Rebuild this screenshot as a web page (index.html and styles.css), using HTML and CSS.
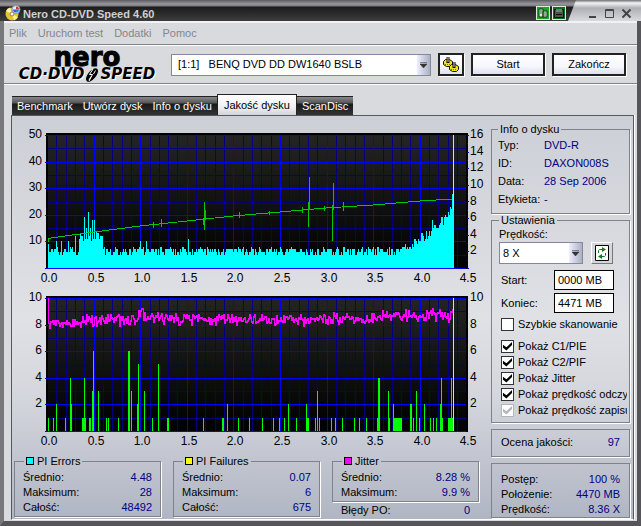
FILE: index.html
```html
<!DOCTYPE html>
<html lang="pl">
  <head>
    <meta charset="UTF-8" />
    <meta name="viewport" content="width=device-width, initial-scale=1.0" />
    <title>Nero CD-DVD Speed 4.60</title>
    <link rel="stylesheet" href="styles.css">
  </head>
  <body>
    <div class="window">
      <header class="titlebar">
        <svg class="app-icon" width="16" height="16" viewBox="0 0 16 16" aria-hidden="true">
          <circle cx="7" cy="9" r="6.5" fill="#e3c62c" />
          <path d="M7 9L1 6a6.5 6.5 0 0 1 4-3.500z" fill="#fff6b0" />
          <path d="M7 9l6 3a6.500 6.500 0 0 1-4 3.400z" fill="#fff08a" />
          <circle cx="7" cy="9" r="2" fill="#f4f4f4" stroke="#998a33" />
          <circle cx="11" cy="4.500" r="4" fill="#e8eef8" stroke="#7f93b5" />
          <path d="M11 4.500V1.500a3 3 0 0 1 3 3z" fill="#d33" />
          <path d="M11 4.500h3a3 3 0 0 1-3 3z" fill="#2a8ad0" />
          <path d="M11 4.500v3a3 3 0 0 1-3-3z" fill="#3a62c8" />
        </svg>
        <h1>Nero CD-DVD Speed 4.60</h1>
        <button class="green-btn" aria-label="Kopiuj">
          <svg width="14" height="14" viewBox="0 0 14 14">
            <path d="M3 3h4v8H3zM7 5h4v6H7z" fill="#d8ead8" stroke="#123c12" />
            <path d="M8 7h2M8 9h2M4 5h2M4 7h2" stroke="#4a6b4a" />
          </svg>
        </button>
        <button class="green-btn dark" aria-label="Zapisz">
          <svg width="14" height="14" viewBox="0 0 14 14">
            <path d="M2.500 3.500h9v8h-9z" fill="#4a564a" stroke="#111" />
            <path d="M4 3h6v3H4z" fill="#6f806f" />
            <path d="M4 8.500h6" stroke="#111" />
          </svg>
        </button>
        <div class="caption-buttons">
          <button aria-label="Minimalizuj">
            <svg width="11" height="11" viewBox="0 0 11 11"><path d="M2 9h7" stroke="#444" stroke-width="2" /></svg>
          </button>
          <button aria-label="Maksymalizuj">
            <svg width="11" height="11" viewBox="0 0 11 11"><path d="M1.500 1.500h8v8h-8zM1 2.500h9" fill="none" stroke="#444" /></svg>
          </button>
          <button aria-label="Zamknij">
            <svg width="11" height="11" viewBox="0 0 11 11"><path d="M1.500 1.500l8 8M9.500 1.500l-8 8" stroke="#444" stroke-width="2" /></svg>
          </button>
        </div>
      </header>

      <nav class="menu">
        <a href="#">Plik</a>
        <a href="#">Uruchom test</a>
        <a href="#">Dodatki</a>
        <a href="#">Pomoc</a>
      </nav>

      <div class="toolbar">
        <div class="logo">
          <div class="logo-top">nero</div>
          <div class="logo-bottom">
            <span>CD·DVD</span>
            <svg width="16" height="14" viewBox="0 0 16 14" aria-hidden="true">
              <ellipse cx="8" cy="7" rx="8" ry="4" transform="rotate(-50 8 7)" />
              <path d="M9 1L5.500 6.500h3L5 13" fill="none" stroke="#fff" stroke-width="1" />
              <path d="M11.500 2.500L9.500 6M7 8.500L5 12" stroke="#fff" />
            </svg>
            <span>SPEED</span>
          </div>
        </div>
        <div class="combo drive">
          <select aria-label="Napęd">
            <option>[1:1] &nbsp; BENQ DVD DD DW1640 BSLB</option>
          </select>
          <svg width="7" height="6" viewBox="0 0 7 6"><path d="M0 .5h7M0 2h7L3.500 6z" fill="#333" stroke="#333" stroke-width=".5" /></svg>
        </div>
        <button class="tool-btn eject" aria-label="Opcje napędu">
          <svg width="18" height="18" viewBox="0 0 18 18">
            <g stroke="#111" fill="#f2e414">
              <path d="M1.500 5.500l2-2h4l3 2v3l-2 2h-4l-3-2z" />
              <path d="M7.500 10.500l2-2h4l3 2v3l-2 2h-4l-3-2z" />
            </g>
            <path d="M6 1v6M12 6v6" stroke="#111" stroke-width="3" />
            <path d="M6 1v5M12 6v5" stroke="#ccc" />
            <path d="M3 8.500h5M9 13.500h5" stroke="#7c7300" stroke-dasharray="1 1" fill="none" />
          </svg>
        </button>
        <button class="tool-btn">Start</button>
        <button class="tool-btn">Zakończ</button>
      </div>

      <div class="tabs" role="tablist">
        <button role="tab">Benchmark</button>
        <button role="tab">Utwórz dysk</button>
        <button role="tab">Info o dysku</button>
        <button role="tab" class="active" aria-selected="true">Jakość dysku</button>
        <button role="tab">ScanDisc</button>
      </div>

      <main class="panel">
        <section class="results">
          <svg class="chart" id="pieChart" viewBox="0 0 475 166" role="img" aria-label="PI Errors"></svg>
          <svg class="chart" id="pifChart" viewBox="0 3 475 163" role="img" aria-label="PI Failures, Jitter"></svg>

          <div class="stats">
            <fieldset>
              <legend><i class="swatch cyan"></i>PI Errors</legend>
              <dl>
                <div><dt>Średnio:</dt><dd>4.48</dd></div>
                <div><dt>Maksimum:</dt><dd>28</dd></div>
                <div><dt>Całość:</dt><dd>48492</dd></div>
              </dl>
            </fieldset>
            <fieldset>
              <legend><i class="swatch yellow"></i>PI Failures</legend>
              <dl>
                <div><dt>Średnio:</dt><dd>0.07</dd></div>
                <div><dt>Maksimum:</dt><dd>6</dd></div>
                <div><dt>Całość:</dt><dd>675</dd></div>
              </dl>
            </fieldset>
            <div>
              <fieldset>
                <legend><i class="swatch magenta"></i>Jitter</legend>
                <dl>
                  <div><dt>Średnio:</dt><dd>8.28 %</dd></div>
                  <div><dt>Maksimum:</dt><dd>9.9 %</dd></div>
                </dl>
              </fieldset>
              <dl class="po-errors">
                <div><dt>Błędy PO:</dt><dd>0</dd></div>
              </dl>
            </div>
          </div>
        </section>

        <aside class="side">
          <fieldset class="disc-info">
            <legend>Info o dysku</legend>
            <dl>
              <div><dt>Typ:</dt><dd>DVD-R</dd></div>
              <div><dt>ID:</dt><dd>DAXON008S</dd></div>
              <div><dt>Data:</dt><dd>28 Sep 2006</dd></div>
              <div><dt>Etykieta:</dt><dd>-</dd></div>
            </dl>
          </fieldset>

          <fieldset class="settings">
            <legend>Ustawienia</legend>
            <label for="speed">Prędkość:</label>
            <div class="speed-row">
              <div class="combo">
                <select id="speed">
                  <option>8 X</option>
                </select>
                <svg width="7" height="6" viewBox="0 0 7 6"><path d="M0 .5h7M0 2h7L3.500 6z" fill="#333" stroke="#333" stroke-width=".5" /></svg>
              </div>
              <button class="refresh" aria-label="Odśwież">
                <svg width="14" height="16" viewBox="0 0 14 16">
                  <path d="M.5.5h13v15H.5z" fill="#fff" stroke="#000" />
                  <path d="M3.500 8V5.500l1-1H8M10.500 8v2.500l-1 1H6" fill="none" stroke="#0a7d1c" />
                  <path d="M7 2l4 2.500L7 7zM7 9l-4 2.500L7 14z" fill="#0a7d1c" />
                </svg>
              </button>
            </div>
            <div class="range-row">
              <label for="start">Start:</label>
              <input type="text" id="start" value="0000 MB" />
            </div>
            <div class="range-row">
              <label for="end">Koniec:</label>
              <input type="text" id="end" value="4471 MB" />
            </div>
            <label class="check quick"><input type="checkbox" />Szybkie skanowanie</label>
            <label class="check"><input type="checkbox" checked />Pokaż C1/PIE</label>
            <label class="check"><input type="checkbox" checked />Pokaż C2/PIF</label>
            <label class="check"><input type="checkbox" checked />Pokaż Jitter</label>
            <label class="check"><input type="checkbox" checked />Pokaż prędkość odczytu</label>
            <label class="check"><input type="checkbox" checked disabled />Pokaż prędkość zapisu</label>
          </fieldset>

          <dl class="box quality">
            <div><dt>Ocena jakości:</dt><dd>97</dd></div>
          </dl>

          <dl class="box progress">
            <div><dt>Postęp:</dt><dd>100 %</dd></div>
            <div><dt>Położenie:</dt><dd>4470 MB</dd></div>
            <div><dt>Prędkość:</dt><dd>8.36 X</dd></div>
          </dl>
        </aside>
      </main>
    </div>

    <script src="charts.js"></script>
  </body>
</html>
```

FILE: styles.css
```css
* {
  margin: 0;
  padding: 0;
  box-sizing: border-box;
}

body {
  font-family: "Liberation Sans", Arial, sans-serif;
  font-size: 11px;
  line-height: 15px;
  color: #000;
}

button,
input,
select {
  font: inherit;
  color: inherit;
}

.window {
  display: flex;
  flex-direction: column;
  min-height: 100vh;
  background: #d9dade;
  border: solid #55555a;
  border-width: 0 4px 5px;
  border-left-color: #77777c;
}

/* Title bar */
.titlebar {
  display: flex;
  align-items: flex-end;
  gap: 2px;
  height: 21px;
  margin: 0 -4px;
  padding-left: 5px;
  background: linear-gradient(#5c5c60, #98989e 4px, #77777c 6px, #1c1c1c 7px, #3c3c3c);
}

.titlebar h1 {
  flex: 1;
  font-size: 11px;
  line-height: 14px;
  color: #cfcfcf;
}

.green-btn {
  width: 14px;
  height: 14px;
  margin-bottom: 1px;
  background: #18a52a;
  border: none;
  outline: 1px solid #dfe8df;
  outline-offset: -1px;
}

.green-btn svg {
  display: block;
}

.green-btn.dark {
  background: #0d6d1a;
}

.caption-buttons {
  display: flex;
  align-items: center;
  gap: 6px;
  height: 21px;
  padding: 5px 9px 0 19px;
  background: linear-gradient(#6f6f74, #f4f4f6 3px, #aeb0b6 8px, #d9dade);
  clip-path: polygon(8px 0, 100% 0, 100% 100%, 0 100%);
}

.caption-buttons button {
  width: 11px;
  height: 11px;
  background: none;
  border: none;
}

.caption-buttons svg {
  display: block;
}

/* Menu */
.menu {
  display: flex;
  gap: 11px;
  height: 24px;
  padding: 3px 5px;
  border-top: 2px solid #f2f2f4;
  border-bottom: 1px solid #808086;
}

.menu a {
  color: #85858a;
  text-decoration: none;
}

/* Toolbar */
.toolbar {
  display: flex;
  align-items: center;
  gap: 7px;
  height: 39px;
  padding: 0 11px 0 10px;
  border-top: 1px solid #fff;
  border-bottom: 1px solid #808086;
  box-shadow: 0 1px 0 #fff;
}

.logo {
  width: 146px;
  margin-right: 4px;
  font-family: "DejaVu Sans", sans-serif;
  font-weight: bold;
  text-align: center;
}

.logo-top {
  font-size: 26px;
  line-height: 20px;
  -webkit-text-stroke: 1px #000;
}

.logo-bottom {
  display: flex;
  align-items: center;
  justify-content: center;
  font-size: 15px;
  font-style: italic;
  line-height: 15px;
  text-shadow: 1px 1px 0 #fff;
}

.combo {
  position: relative;
  height: 22px;
}

.combo.drive {
  flex: 1;
}

.combo select {
  appearance: none;
  width: 100%;
  height: 100%;
  padding: 0 18px 0 6px;
  border: 1px solid #8388a0;
  border-radius: 0;
  background: linear-gradient(90deg, #eef, #aab0c2) right / 13px 100% no-repeat #fff;
}

.combo svg {
  position: absolute;
  right: 4px;
  top: 8px;
  pointer-events: none;
}

.tool-btn {
  width: 74px;
  height: 23px;
  border: 2px solid #222;
  background: linear-gradient(#fff, #f6f6fc 60%, #e0e0ee);
  box-shadow: 1px 1px 0 #fff;
}

.tool-btn.eject {
  width: 26px;
}

.eject svg {
  display: block;
  margin: auto;
}

/* Tabs */
.tabs {
  display: flex;
  align-items: flex-end;
  padding: 10px 3px 0 8px;
}

.tabs button {
  height: 19px;
  padding: 0 5px;
  border: solid #222;
  border-width: 1px 0 0;
  background: linear-gradient(#88888c, #555 6px, #1a1a1a 7px, #333);
  color: #fff;
}

.tabs button.active {
  height: 21px;
  padding: 0 6px;
  border-width: 1px 1px 0;
  background: linear-gradient(#fff, #f0f0f4 60%, #d2d4da);
  color: #000;
}

/* Panel */
.panel {
  flex: 1;
  display: grid;
  grid-template-columns: 1fr 139px;
  gap: 4px;
  margin: 0 3px 1px 7px;
  padding: 4px 3px 1px 0;
  border: 1px solid #55585f;
  border-bottom-color: #fff;
  box-shadow: 1px 0 0 #fff;
  background: linear-gradient(#cccfd6, #e0e1e5 50%, #d4d6dd 70%, #b0b5c3);
}

fieldset,
.box {
  min-width: 0;
  border: 1px solid #808289;
  box-shadow: 1px 1px 0 #fff;
}

legend {
  padding: 0 2px;
  line-height: 13px;
}

dl div {
  display: flex;
  justify-content: space-between;
}

dd {
  color: #000080;
}

.chart {
  display: block;
  width: 100%;
  height: auto;
  shape-rendering: crispEdges;
}

.chart text {
  font-size: 12px;
}

.stats {
  display: grid;
  grid-template-columns: repeat(3, 1fr);
  gap: 12px;
  align-items: start;
  margin-top: 6px;
  padding: 0 8px 0 2px;
}

.stats fieldset {
  padding: 2px 8px 1px;
}

.stats legend {
  margin-left: 1px;
}

.swatch {
  display: inline-block;
  width: 8px;
  height: 8px;
  margin-right: 3px;
  border: 1px solid #000;
}

.cyan {
  background: #00ffff;
}

.yellow {
  background: #ffff00;
}

.magenta {
  background: #ff00ff;
}

.po-errors {
  padding: 1px 9px 0;
}

/* Side column */
.side {
  display: flex;
  flex-direction: column;
  padding-top: 3px;
}

.disc-info {
  height: 91px;
  padding: 0 6px;
}

.disc-info div {
  justify-content: flex-start;
  line-height: 18px;
}

.disc-info dt {
  width: 46px;
}

.settings {
  height: 209px;
  padding: 0 2px 0 7px;
}

.speed-row {
  display: flex;
  align-items: center;
  gap: 8px;
  margin-bottom: 6px;
}

.speed-row .combo {
  width: 84px;
}

.speed-row select {
  padding-left: 3px;
}

.refresh {
  display: grid;
  place-items: center;
  width: 22px;
  height: 22px;
  border: 1px solid;
  border-color: #fff #777 #777 #fff;
  background: #d4d6dc;
}

.range-row {
  display: flex;
  justify-content: space-between;
  align-items: center;
  margin: 0 13px 3px 2px;
}

.range-row input {
  width: 60px;
  height: 20px;
  padding: 0 3px;
  border: 1px solid #000;
  background: #fff;
}

.check {
  display: flex;
  align-items: center;
  gap: 4px;
  height: 16px;
  padding-left: 2px;
  overflow: hidden;
  white-space: nowrap;
}

.check.quick {
  margin-bottom: 6px;
}

.check input {
  appearance: none;
  flex: none;
  width: 13px;
  height: 13px;
  border: 1px solid #333;
  background: #fff;
}

.check input:checked::before {
  content: "";
  display: block;
  width: 9px;
  height: 9px;
  margin: 1px;
  background: #000;
  clip-path: polygon(0 35%, 38% 65%, 100% 5%, 100% 40%, 38% 100%, 0 70%);
}

.check input:disabled {
  border-color: #b4b6bc;
}

.check input:disabled::before {
  background: #b4b6bc;
}

.box.quality {
  margin: 6px 0;
  padding: 5px 9px 6px;
}

.box.progress {
  flex: 1;
  padding: 8px 9px 0;
}
```

FILE: charts.js
```js
const SVG_NS = "http://www.w3.org/2000/svg";

// Plot area shared by both charts
const LEFT = 35;
const RIGHT = 455;
const TOP = 15;
const BOTTOM = 148;
const SCAN_END = 441;

// [x, errors], highest columns of the scan
const PIE_PEAKS = [
  [36, 9], [44, 10], [49, 10], [56, 10], [63, 12], [68, 12], [70, 12],
  [72, 19], [74, 15], [76, 21], [78, 15], [80, 18], [82, 18], [84, 14],
  [86, 13], [88, 12], [128, 10], [134, 10], [176, 11], [268, 8], [402, 11],
  [409, 13], [420, 18], [422, 16], [430, 19], [436, 21], [438, 23],
  [440, 28],
];

// [x, failures, width]
const PIF_BARS = [
  [36, 1], [41, 1], [44, 2], [53, 1], [58, 4], [59, 2], [70, 1, 4],
  [72, 4], [77, 1, 2], [80, 3], [81, 6], [86, 3], [94, 1], [96, 1],
  [106, 1], [116, 6, 2], [119, 3], [125, 2], [126, 5], [132, 3], [140, 1],
  [146, 5], [155, 1, 2], [191, 1], [210, 1, 2], [215, 2], [226, 1],
  [237, 1], [250, 1], [261, 1], [267, 1], [272, 1], [276, 2], [284, 1],
  [294, 2], [295, 1, 2], [303, 1], [305, 3], [307, 1], [319, 1], [323, 1],
  [330, 1], [342, 1], [347, 1], [354, 1], [365, 1], [366, 4, 2], [376, 3],
  [377, 1], [381, 2], [381, 1, 9], [398, 2, 2], [401, 1], [404, 3],
  [407, 1], [412, 2], [418, 1], [421, 1], [424, 1], [428, 2], [429, 4],
  [430, 1], [436, 1, 6], [439, 4],
];

const SPEED_LINE =
  "M36 122V119L39 118L82 112L128 106L175 101L221 96L268 92L314 88L361 85L408 81L440 79";

// [x, top, bottom]
const SPEED_SPIKES = [
  [141, 102, 108], [149, 99, 107], [192, 82, 110], [193, 90, 100],
  [191, 98, 105], [227, 92, 98], [257, 91, 95], [290, 87, 93],
  [296, 82, 107], [297, 57, 90], [312, 86, 91], [320, 85, 121],
  [321, 63, 90], [331, 82, 91],
];

let seed = 7;
function random() {
  seed = (seed * 16807) % 2147483647;
  return seed / 2147483647;
}

function add(svg, name, attrs, text) {
  const el = document.createElementNS(SVG_NS, name);
  Object.keys(attrs).forEach((key) => el.setAttribute(key, attrs[key]));
  if (text !== undefined) {
    el.textContent = text;
  }
  svg.appendChild(el);
  return el;
}

function rect(svg, x, y, width, height, fill) {
  add(svg, "rect", { x, y, width, height, fill });
}

function drawGrid(svg, id) {
  const defs = add(svg, "defs", {});
  const gradient = add(defs, "linearGradient", { id, x2: 0, y2: 1 });
  add(gradient, "stop", { offset: 0, "stop-color": "#242424" });
  add(gradient, "stop", { offset: 1, "stop-color": "#000" });

  rect(svg, 34, 13, 422, 136, "#000");
  rect(svg, 36, TOP, 418, 133, `url(#${id})`);

  for (let i = 1; i < 45; i++) {
    if (i % 5) {
      rect(svg, LEFT + Math.round(i * 9.32), TOP, 1, 133, "#000080");
    }
  }
  for (let i = 1; i < 10; i += 2) {
    rect(svg, 36, TOP + Math.round(i * 13.3), 418, 1, "#000080");
  }
  for (let i = 5; i < 45; i += 5) {
    rect(svg, LEFT + Math.round(i * 9.32), TOP, 1, 133, "#0000ff");
  }
  for (let i = 0; i <= 10; i += 2) {
    rect(svg, 33, TOP + Math.round(i * 13.3), 421, 1, "#0000ff");
  }
}

function drawLabels(svg, left, right) {
  left.forEach((label, i) => {
    const y = TOP + Math.round(i * 26.6) + 3;
    add(svg, "text", { x: 30, y, "text-anchor": "end" }, label);
  });
  right.forEach((label, i) => {
    const y = TOP + Math.round((i * 133) / right.length) + 3;
    add(svg, "text", { x: 458, y }, label);
  });
  for (let i = 0; i <= 9; i++) {
    const x = LEFT + Math.round(i * 46.6) + 2;
    add(svg, "text", { x, y: 162, "text-anchor": "middle" }, (i / 2).toFixed(1));
  }
}

function drawErrors(svg) {
  const peaks = new Map(PIE_PEAKS);
  for (let x = 36; x < SCAN_END; x++) {
    let value = 5 + Math.floor(random() * 2.6 + random() * random() * 2);
    if (x > 66 && x < 91) {
      value += 5;
    }
    if (x > 370) {
      value += Math.floor(Math.pow((x - 370) / 71, 2) * 16);
    }
    value = Math.max(value, peaks.get(x) || 0);
    const height = Math.round(value * 2.66);
    rect(svg, x, BOTTOM - height, 1, height, "#00ffff");
  }
}

function drawSpeed(svg) {
  add(svg, "path", { d: SPEED_LINE, fill: "none", stroke: "#00c800" });
  SPEED_SPIKES.forEach(([x, top, bottom]) => {
    rect(svg, x, top, 1, bottom - top, "#00c800");
  });
}

function drawJitter(svg) {
  rect(svg, 36, TOP, 1, 26, "#ff00ff");
  let last = 40;
  for (let x = 37; x < SCAN_END; x++) {
    let base = x < 105 ? 40 - (x - 37) / 14 : 35;
    if (x > 360) {
      base = 32;
    }
    // taller bursts around 1.0 GB
    if (Math.abs(x - 128) < 3) {
      base -= 9;
    }
    const y = Math.round(base + (random() + random() - 1) * 7);
    const top = Math.min(y, last);
    rect(svg, x, top, 1, Math.abs(y - last) + 2, "#ff00ff");
    last = y;
  }
}

const pieChart = document.getElementById("pieChart");
drawGrid(pieChart, "pieShade");
rect(pieChart, SCAN_END, TOP, 1, 75, "#dcdcdc");
drawErrors(pieChart);
rect(pieChart, SCAN_END, 90, 1, 58, "#00ffff");
drawSpeed(pieChart);
for (let i = 0; i <= 16; i++) {
  rect(pieChart, RIGHT, TOP + Math.round(i * 8.3), i % 2 ? 1 : 2, 1, "#0000ff");
}
drawLabels(pieChart, [50, 40, 30, 20, 10], [16, 14, 12, 10, 8, 6, 4, 2]);

const pifChart = document.getElementById("pifChart");
drawGrid(pifChart, "pifShade");
PIF_BARS.forEach(([x, value, width = 1]) => {
  const height = Math.round(value * 13.3);
  rect(pifChart, x, BOTTOM - height, width, height, "#00ff00");
});
drawJitter(pifChart);
rect(pifChart, SCAN_END, TOP, 1, 133, "#dcdcdc");
drawLabels(pifChart, [10, 8, 6, 4, 2], [10, 8, 6, 4, 2]);
```
